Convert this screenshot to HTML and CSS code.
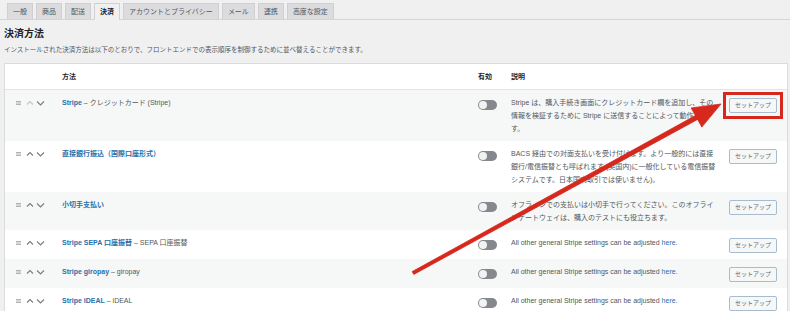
FILE: index.html
```html
<!DOCTYPE html>
<html lang="ja">
<head>
<meta charset="utf-8">
<title>決済方法</title>
<link rel="stylesheet" href="styles.css">
</head>
<body>
<div class="page">
  <nav class="tabs">
    <a class="tab">一般</a>
    <a class="tab">商品</a>
    <a class="tab">配送</a>
    <a class="tab active">決済</a>
    <a class="tab">アカウントとプライバシー</a>
    <a class="tab">メール</a>
    <a class="tab">連携</a>
    <a class="tab">高度な設定</a>
  </nav>
  <h2 class="title">決済方法</h2>
  <p class="intro">インストールされた決済方法は以下のとおりで、フロントエンドでの表示順序を制御するために並べ替えることができます。</p>

  <div class="table">
    <div class="row head">
      <div></div>
      <div>方法</div>
      <div>有効</div>
      <div>説明</div>
      <div></div>
    </div>

    <div class="row odd">
      <div class="sort">
        <svg width="30" height="10" viewBox="0 0 30 10"><g class="ham"><line x1="0" y1="3.5" x2="5" y2="3.5"/><line x1="0" y1="5" x2="5" y2="5"/><line x1="0" y1="6.5" x2="5" y2="6.5"/></g><polyline class="chev faint" points="11,6.5 14,3.5 17,6.5"/><polyline class="chev" points="21,3.5 24.5,7 28,3.5"/></svg>
      </div>
      <div class="name"><a class="link">Stripe</a> – クレジットカード (Stripe)</div>
      <div class="tog"><span class="toggle"><span class="knob"></span></span></div>
      <div class="desc">Stripe は、購入手続き画面にクレジットカード欄を追加し、その情報を検証するために Stripe に送信することによって動作します。</div>
      <div class="act"><span class="btn">セットアップ</span></div>
    </div>

    <div class="row">
      <div class="sort">
        <svg width="30" height="10" viewBox="0 0 30 10"><g class="ham"><line x1="0" y1="3.5" x2="5" y2="3.5"/><line x1="0" y1="5" x2="5" y2="5"/><line x1="0" y1="6.5" x2="5" y2="6.5"/></g><polyline class="chev" points="11,6.5 14,3.5 17,6.5"/><polyline class="chev" points="21,3.5 24.5,7 28,3.5"/></svg>
      </div>
      <div class="name"><a class="link">直接銀行振込（国際口座形式）</a></div>
      <div class="tog"><span class="toggle"><span class="knob"></span></span></div>
      <div class="desc">BACS 経由での対面支払いを受け付けます。より一般的には直接銀行/電信振替とも呼ばれます (英国内)に一般化している電信振替システムです。日本国内取引では使いません)。</div>
      <div class="act"><span class="btn">セットアップ</span></div>
    </div>

    <div class="row odd">
      <div class="sort">
        <svg width="30" height="10" viewBox="0 0 30 10"><g class="ham"><line x1="0" y1="3.5" x2="5" y2="3.5"/><line x1="0" y1="5" x2="5" y2="5"/><line x1="0" y1="6.5" x2="5" y2="6.5"/></g><polyline class="chev" points="11,6.5 14,3.5 17,6.5"/><polyline class="chev" points="21,3.5 24.5,7 28,3.5"/></svg>
      </div>
      <div class="name"><a class="link">小切手支払い</a></div>
      <div class="tog"><span class="toggle"><span class="knob"></span></span></div>
      <div class="desc">オフラインでの支払いは小切手で行ってください。このオフラインゲートウェイは、購入のテストにも役立ちます。</div>
      <div class="act"><span class="btn">セットアップ</span></div>
    </div>

    <div class="row">
      <div class="sort">
        <svg width="30" height="10" viewBox="0 0 30 10"><g class="ham"><line x1="0" y1="3.5" x2="5" y2="3.5"/><line x1="0" y1="5" x2="5" y2="5"/><line x1="0" y1="6.5" x2="5" y2="6.5"/></g><polyline class="chev" points="11,6.5 14,3.5 17,6.5"/><polyline class="chev" points="21,3.5 24.5,7 28,3.5"/></svg>
      </div>
      <div class="name"><a class="link">Stripe SEPA 口座振替</a> – SEPA 口座振替</div>
      <div class="tog"><span class="toggle"><span class="knob"></span></span></div>
      <div class="desc">All other general Stripe settings can be adjusted <a class="plain">here.</a></div>
      <div class="act"><span class="btn">セットアップ</span></div>
    </div>

    <div class="row odd">
      <div class="sort">
        <svg width="30" height="10" viewBox="0 0 30 10"><g class="ham"><line x1="0" y1="3.5" x2="5" y2="3.5"/><line x1="0" y1="5" x2="5" y2="5"/><line x1="0" y1="6.5" x2="5" y2="6.5"/></g><polyline class="chev" points="11,6.5 14,3.5 17,6.5"/><polyline class="chev" points="21,3.5 24.5,7 28,3.5"/></svg>
      </div>
      <div class="name"><a class="link">Stripe giropay</a> – giropay</div>
      <div class="tog"><span class="toggle"><span class="knob"></span></span></div>
      <div class="desc">All other general Stripe settings can be adjusted <a class="plain">here.</a></div>
      <div class="act"><span class="btn">セットアップ</span></div>
    </div>

    <div class="row">
      <div class="sort">
        <svg width="30" height="10" viewBox="0 0 30 10"><g class="ham"><line x1="0" y1="3.5" x2="5" y2="3.5"/><line x1="0" y1="5" x2="5" y2="5"/><line x1="0" y1="6.5" x2="5" y2="6.5"/></g><polyline class="chev" points="11,6.5 14,3.5 17,6.5"/><polyline class="chev" points="21,3.5 24.5,7 28,3.5"/></svg>
      </div>
      <div class="name"><a class="link">Stripe iDEAL</a> – iDEAL</div>
      <div class="tog"><span class="toggle"><span class="knob"></span></span></div>
      <div class="desc">All other general Stripe settings can be adjusted <a class="plain">here.</a></div>
      <div class="act"><span class="btn">セットアップ</span></div>
    </div>
  </div>

  <svg class="annot" width="790" height="311" viewBox="0 0 790 311">
    <rect x="724.5" y="93.5" width="57" height="24" fill="none" stroke="#d7281e" stroke-width="3"/>
    <polygon points="412.2,271.6 695.4,115.6 691.2,107.9 721,104 701.8,127.1 697.6,119.4 413.8,274.4" fill="#d7281e" stroke="#d7281e" stroke-width="0.8" stroke-linejoin="round"/>
  </svg>
</div>
</body>
</html>
```

FILE: styles.css
```css
* { box-sizing: border-box; }

html, body {
  margin: 0;
  padding: 0;
  background: #f0f0f1;
}

body {
  font-family: "Liberation Sans", "Noto Sans CJK JP", sans-serif;
  color: #3c434a;
}

.page {
  position: relative;
  width: 790px;
  height: 311px;
  overflow: hidden;
}

.tabs {
  display: flex;
  gap: 3px;
  padding: 3px 0 0 7px;
  border-bottom: 1px solid #d5d5d8;
  height: 20px;
}

.tab {
  display: block;
  height: 16px;
  padding: 0 5px;
  font-size: 7px;
  line-height: 15px;
  color: #50575e;
  background: #dcdcde;
  border: 1px solid #d0d0d3;
  border-bottom: none;
}

.tab.active {
  background: #f0f0f1;
  color: #1d2327;
  font-weight: 700;
  height: 17px;
}

.title {
  margin: 7px 0 0 4px;
  font-size: 10px;
  line-height: 14px;
  font-weight: 700;
  color: #1d2327;
}

.intro {
  margin: 4px 0 0 4px;
  font-size: 6.5px;
  line-height: 10px;
  color: #50575e;
}

.table {
  margin: 8px 2px 0 4px;
  background: #fff;
  border: 1px solid #dcdcde;
}

.row {
  display: grid;
  grid-template-columns: 57px 416px 33px 218px 58px;
  padding: 6px 0;
  font-size: 7px;
  line-height: 13px;
}

.row.odd {
  background: #f6f7f7;
}

.row.head {
  height: 26px;
  padding: 0;
  align-items: center;
  font-weight: 700;
  color: #1d2327;
  border-bottom: 1px solid #e2e3e5;
}

.sort {
  padding-left: 11px;
  height: 13px;
  display: flex;
  align-items: center;
}

.ham line {
  stroke: #a7aaad;
  stroke-width: 0.9;
}

.chev {
  fill: none;
  stroke: #787c82;
  stroke-width: 1.1;
}

.chev.faint {
  stroke: #c3c4c7;
}

.name {
  color: #50575e;
}

.link {
  color: #2a6fa8;
  font-weight: 700;
}

.plain {
  color: #2a6fa8;
}

.tog {
  padding-top: 4px;
}

.toggle {
  display: flex;
  align-items: center;
  width: 19px;
  height: 10px;
  padding: 0 1px;
  border-radius: 5px;
  background: #85888c;
}

.knob {
  width: 8px;
  height: 8px;
  border-radius: 50%;
  background: #f2f2f2;
}

.desc {
  padding-right: 10px;
  color: #50575e;
}

.act {
  padding-top: 2px;
}

.btn {
  display: flex;
  width: 48px;
  height: 15px;
  align-items: center;
  justify-content: center;
  font-size: 6px;
  color: #5d6d7e;
  background: #f6f7f7;
  border: 1px solid #a9bccd;
  border-radius: 2px;
}

.annot {
  position: absolute;
  left: 0;
  top: 0;
  pointer-events: none;
}
```
